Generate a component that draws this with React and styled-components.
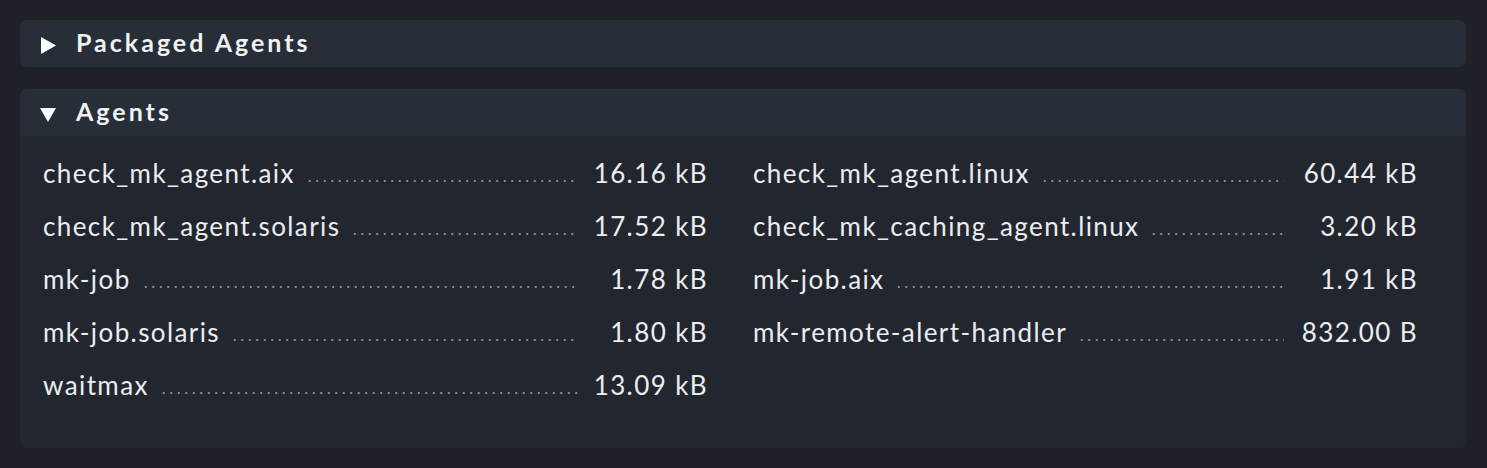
import React from "react";
import styled, { createGlobalStyle } from "styled-components";

const GlobalStyle = createGlobalStyle`
  html, body {
    margin: 0;
    padding: 0;
    background: #1e2128;
  }
  body {
    font-family: Lato, "Noto Sans", sans-serif;
    color: #ecedef;
  }
`;

const Page = styled.div`
  padding: 20px 21px 21px 20px;
  display: flex;
  flex-direction: column;
  gap: 22px;
`;

const Section = styled.section`
  background: #22272f;
  border-radius: 7px;
  overflow: hidden;
`;

const Header = styled.div`
  height: 47px;
  display: flex;
  align-items: center;
  padding-left: 20px;
  padding-bottom: 3px;
  box-sizing: border-box;
  gap: 20px;
  background: #272e38;
  font-size: 25px;
  font-weight: 700;
  letter-spacing: 3px;
  color: #f1f2f3;
`;

const Caret = styled.svg`
  width: 16px;
  height: 17px;
  flex: none;
  margin-top: 6px;
  fill: #ffffff;
`;

const Body = styled.div`
  display: grid;
  grid-template-columns: 664px 664px;
  column-gap: 46px;
  padding: 11px 23px 36px;
`;

const Row = styled.div`
  height: 53px;
  display: flex;
  align-items: baseline;
  padding-top: 10px;
  box-sizing: border-box;
  font-size: 26px;
  letter-spacing: 1.4px;
`;

const Name = styled.span`
  flex: none;
  white-space: nowrap;
`;

const Leader = styled.span`
  flex: 1;
  height: 4px;
  margin-left: 11px;
  margin-bottom: -1px;
  background-image: radial-gradient(circle, #8a8f97 1.1px, transparent 1.5px);
  background-size: 7.5px 4px;
  background-repeat: repeat-x;
`;

const Size = styled.span`
  flex: none;
  width: ${(p) => p.$w}px;
  margin-right: -1px;
  text-align: right;
  white-space: nowrap;
`;

const Triangle = ({ open }) => (
  <Caret viewBox="0 0 16 17">
    {open ? <polygon points="0,2 16,2 8,16" /> : <polygon points="1,0 16,8.5 1,17" />}
  </Caret>
);

const agents = [
  ["check_mk_agent.aix", "16.16 kB"],
  ["check_mk_agent.linux", "60.44 kB"],
  ["check_mk_agent.solaris", "17.52 kB"],
  ["check_mk_caching_agent.linux", "3.20 kB"],
  ["mk-job", "1.78 kB"],
  ["mk-job.aix", "1.91 kB"],
  ["mk-job.solaris", "1.80 kB"],
  ["mk-remote-alert-handler", "832.00 B"],
  ["waitmax", "13.09 kB"],
];

export default function App() {
  return (
    <>
      <GlobalStyle />
      <Page>
        <Section>
          <Header>
            <Triangle />
            Packaged Agents
          </Header>
        </Section>
        <Section>
          <Header>
            <Triangle open />
            Agents
          </Header>
          <Body>
            {agents.map(([name, size], i) => (
              <Row key={name}>
                <Name>{name}</Name>
                <Leader />
                <Size $w={i % 2 ? 134 : 130}>{size}</Size>
              </Row>
            ))}
          </Body>
        </Section>
      </Page>
    </>
  );
}
